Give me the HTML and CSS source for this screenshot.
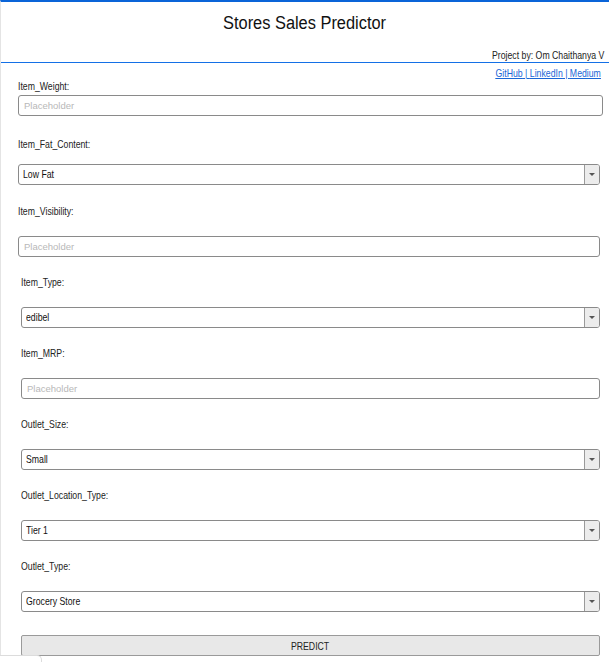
FILE: index.html
```html
<!DOCTYPE html>
<html>
<head>
<meta charset="utf-8">
<title>Stores Sales Predictor</title>
<link rel="stylesheet" href="styles.css">
</head>
<body>
<div class="page">
  <header class="header">
    <h1 class="title"><span class="nt nt-center">Stores Sales Predictor</span></h1>
    <p class="author"><span class="nt nt-right">Project by: Om Chaithanya V</span></p>
  </header>
  <nav class="links">
    <span class="nt nt-right"><a href="#">GitHub</a> | <a href="#">LinkedIn</a> | <a href="#">Medium</a></span>
  </nav>
  <form class="form">
    <div class="field field-first">
      <label class="label"><span class="nt">Item_Weight:</span></label>
      <input class="control control-wide" type="text" placeholder="Placeholder">
    </div>
    <div class="field field-fat">
      <label class="label"><span class="nt">Item_Fat_Content:</span></label>
      <div class="select"><span class="select-value"><span class="nt">Low Fat</span></span><span class="select-arrow"></span></div>
    </div>
    <div class="field field-vis">
      <label class="label"><span class="nt">Item_Visibility:</span></label>
      <input class="control" type="text" placeholder="Placeholder">
    </div>
    <div class="field field-shift">
      <label class="label"><span class="nt">Item_Type:</span></label>
      <div class="select"><span class="select-value"><span class="nt">edibel</span></span><span class="select-arrow"></span></div>
    </div>
    <div class="field field-shift">
      <label class="label"><span class="nt">Item_MRP:</span></label>
      <input class="control" type="text" placeholder="Placeholder">
    </div>
    <div class="field field-shift">
      <label class="label"><span class="nt">Outlet_Size:</span></label>
      <div class="select"><span class="select-value"><span class="nt">Small</span></span><span class="select-arrow"></span></div>
    </div>
    <div class="field field-shift">
      <label class="label"><span class="nt">Outlet_Location_Type:</span></label>
      <div class="select"><span class="select-value"><span class="nt">Tier 1</span></span><span class="select-arrow"></span></div>
    </div>
    <div class="field field-shift">
      <label class="label"><span class="nt">Outlet_Type:</span></label>
      <div class="select"><span class="select-value"><span class="nt">Grocery Store</span></span><span class="select-arrow"></span></div>
    </div>
    <button class="predict" type="button"><span class="nt nt-center">PREDICT</span></button>
  </form>
</div>
<div class="status-tab"></div>
</body>
</html>
```

FILE: styles.css
```css
* { box-sizing: border-box; }
html, body { margin: 0; padding: 0; background: #fff; }
body {
  font-family: "Liberation Sans", Arial, sans-serif;
  color: #222;
  width: 609px;
  height: 662px;
  overflow: hidden;
}
/* narrow text rendering, as in the reference */
.nt {
  display: inline-block;
  transform: scaleX(0.83);
  transform-origin: left center;
  white-space: nowrap;
}
.nt-center { transform-origin: center center; }
.nt-right { transform-origin: right center; }
.title .nt { transform: scaleX(0.91); }

.page {
  border-top: 2px solid #0a64d8;
  border-left: 1px solid #e4e4e4;
  height: 655px;
}
.header {
  border-bottom: 1px solid #1470e6;
  padding-bottom: 1px;
}
.title {
  margin: 0;
  padding-top: 11px;
  height: 41px;
  line-height: 20px;
  text-align: center;
  font-size: 18px;
  font-weight: normal;
  color: #111;
}
.author {
  margin: 6px 0 0;
  text-align: right;
  padding-right: 5px;
  font-size: 10.5px;
  line-height: 12px;
  color: #222;
}
.links {
  text-align: right;
  padding-right: 8px;
  margin-top: 4px;
  font-size: 10.5px;
  line-height: 12px;
  color: #1a66d6;
}
.links .nt { text-decoration: underline; }
.links a { color: #1a66d6; text-decoration: underline; }
.form {
  padding: 1px 6px 0 17px;
}
.field { margin-top: 19px; }
.field-first { margin-top: 0; }
.field-fat { margin-top: 22px; }
.field-vis { margin-top: 20px; }
.field-shift { margin-left: 3px; margin-right: 3px; }
.label {
  display: block;
  font-size: 10.5px;
  line-height: 12px;
  color: #222;
  margin-bottom: 19px;
}
.field-first .label { margin-bottom: 3px; }
.field-fat .label { margin-bottom: 14px; }
.control {
  display: block;
  width: calc(100% - 3px);
  height: 21px;
  border: 1px solid #8a8a8a;
  border-radius: 3px;
  padding: 0 5px;
  font-family: inherit;
  font-size: 9.5px;
  color: #222;
  outline: none;
}
.control-wide { width: 100%; }
.control::placeholder { color: #b8b8b8; }
.select {
  display: flex;
  width: calc(100% - 3px);
  height: 21px;
  border: 1px solid #8a8a8a;
  border-radius: 3px;
  overflow: hidden;
}
.field-shift .select, .field-shift .control { width: 100%; }
.select-value {
  flex: 1;
  padding-left: 4px;
  font-size: 10.5px;
  line-height: 19px;
  color: #111;
}
.select-arrow {
  width: 15px;
  background: #ececec;
  border-left: 1px solid #9a9a9a;
  display: flex;
  align-items: center;
  justify-content: center;
}
.select-arrow::before {
  content: "";
  border-left: 3px solid transparent;
  border-right: 3px solid transparent;
  border-top: 3px solid #555;
}
.predict {
  display: block;
  margin: 23px 3px 0 3px;
  width: calc(100% - 6px);
  height: 21px;
  background: #e8e8e8;
  border: 1px solid #9a9a9a;
  border-radius: 2px;
  font-family: inherit;
  font-size: 10.5px;
  color: #222;
  padding: 0;
}
.status-tab {
  width: 42px;
  height: 7px;
  border-top: 1px solid #dcdcdc;
  border-right: 1px solid #dcdcdc;
  border-top-right-radius: 5px;
}
```
